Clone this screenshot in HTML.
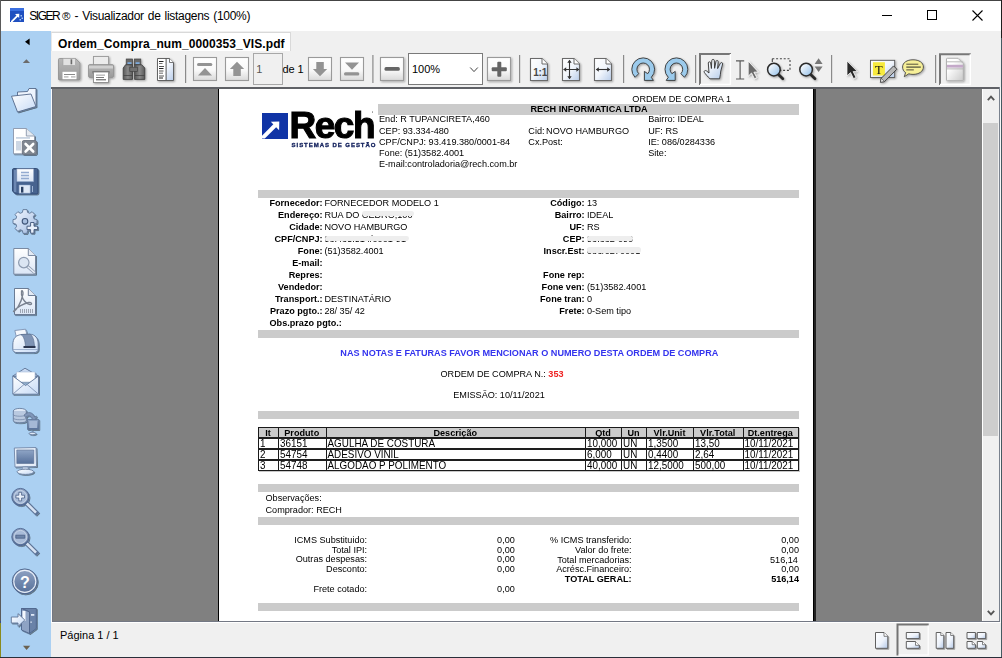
<!DOCTYPE html>
<html><head><meta charset="utf-8">
<style>
*{margin:0;padding:0;box-sizing:border-box}
html,body{width:1002px;height:658px;overflow:hidden;background:#fff;font-family:"Liberation Sans",sans-serif;position:relative}
.a{position:absolute}
.t{position:absolute;font-size:9.12px;line-height:9px;white-space:nowrap;color:#000}
#doc{position:absolute;left:0;top:0;width:1002px;height:658px;will-change:transform}
.b{font-weight:bold}
.r{text-align:right}
.bar{position:absolute;background:#cbcbcb}
.sep{position:absolute;width:1px;height:28px;top:55px;background:#8c8c8c}
.btn{position:absolute;width:24px;height:24px;top:57px;border:1px solid #9a9a9a;background:linear-gradient(#ffffff 0%,#f7f7f7 55%,#dcdcdc 100%)}
.pressed{position:absolute;border-top:2px solid #7d7d7d;border-left:2px solid #7d7d7d;border-right:1px solid #fff;border-bottom:1px solid #fff;background:#f0f0f0}
svg{position:absolute;overflow:visible}
.blur{display:inline-block;height:8px;background:linear-gradient(90deg,#dedede,#ececec 30%,#e2e2e2 60%,#efefef);border-radius:4px;vertical-align:-1px;filter:blur(0.6px)}
</style></head><body>

<!-- window border -->
<div class="a" style="left:0;top:0;width:1002px;height:1px;background:#444"></div>
<div class="a" style="left:0;top:0;width:1px;height:658px;background:#5a5a5a"></div>
<div class="a" style="left:1000px;top:31px;width:1px;height:627px;background:#f8f8f8"></div>
<div class="a" style="left:1001px;top:0;width:1px;height:38px;background:#1e1e1e"></div>
<div class="a" style="left:1001px;top:38px;width:1px;height:620px;background:#465a62"></div>

<!-- title bar -->
<svg style="left:10px;top:8px" width="14" height="14" viewBox="0 0 14 14"><rect width="14" height="14" fill="#1f4fc0"/><rect width="14" height="3" fill="#3a6fe0"/><path d="M1 13 L6.5 7.5 L5 6 L9.3 5.8 L9.2 10 L7.8 8.7 L2.5 14 L1 14 Z" fill="#fff"/><g fill="#9fc0f0"><rect x="10.5" y="7" width="1.5" height="1.5"/><rect x="11.5" y="9.5" width="1.5" height="1.5"/><rect x="9.5" y="11" width="1.5" height="1.5"/></g></svg>
<div class="a" style="left:29.3px;top:8px;font-size:12px;line-height:16px;color:#000;white-space:nowrap"><span style="letter-spacing:-1.5px">SIGER</span><span style="margin-left:2.8px;font-size:11.5px">®</span><span style="letter-spacing:-0.3px;word-spacing:1px"> - Visualizador de listagens (100%)</span></div>
<div class="a" style="left:882px;top:15px;width:10px;height:1px;background:#000"></div>
<div class="a" style="left:927px;top:10px;width:10px;height:10px;border:1px solid #000"></div>
<svg style="left:972px;top:10px" width="11" height="11"><path d="M0.5 0.5L10.5 10.5M10.5 0.5L0.5 10.5" stroke="#000" stroke-width="1.1"/></svg>

<!-- sidebar -->
<div class="a" style="left:1px;top:31px;width:50px;height:626px;background:#abd0f2"></div>

<!-- SIDEBAR -->
<svg style="left:0;top:0" width="52" height="658" viewBox="0 0 52 658">
<defs>
<linearGradient id="sW" x1="0" y1="0" x2="1" y2="1"><stop offset="0" stop-color="#ffffff"/><stop offset="1" stop-color="#c7dbf6"/></linearGradient>
<linearGradient id="sW2" x1="0" y1="0" x2="0" y2="1"><stop offset="0" stop-color="#ffffff"/><stop offset="1" stop-color="#dbe6f6"/></linearGradient>
<linearGradient id="sB" x1="0" y1="0" x2="0" y2="1"><stop offset="0" stop-color="#8fa5c6"/><stop offset="1" stop-color="#56709a"/></linearGradient>
<linearGradient id="sG" x1="0" y1="0" x2="1" y2="1"><stop offset="0" stop-color="#f2f7ff"/><stop offset="0.6" stop-color="#c3d4ee"/><stop offset="1" stop-color="#8fa9d2"/></linearGradient>
<linearGradient id="sHelp" x1="0" y1="0" x2="0" y2="1"><stop offset="0" stop-color="#8fa3c4"/><stop offset="1" stop-color="#566f98"/></linearGradient>
<filter id="ss" x="-20%" y="-20%" width="150%" height="150%"><feGaussianBlur in="SourceAlpha" stdDeviation="0.7"/><feOffset dx="0.8" dy="1"/><feComponentTransfer><feFuncA type="linear" slope="0.45"/></feComponentTransfer><feMerge><feMergeNode/><feMergeNode in="SourceGraphic"/></feMerge></filter>
</defs>
<path d="M29.6 38.4 L25 41.8 L29.6 45.2 Z" fill="#000"/>
<path d="M22.8 63.1 L26.4 59.2 L30 63.1 Z" fill="#6b6b6b"/>
<path d="M23 645.8 L30.2 645.8 L26.6 650.1 Z" fill="#6b6150"/>

<g filter="url(#ss)" stroke="#55698a" stroke-width="0.9" stroke-linejoin="round">
<!-- folder -->
<path d="M17.5 111.5 L17.5 92 L27.5 91.5 L29 88.5 L36 88.5 L36 106.5 Z" fill="#eef4fd"/>
<path d="M11.5 96.2 L31 94 L36 106.5 L17.5 112 Z" fill="url(#sW)"/>

<!-- doc x -->
<path d="M13.5 128.5 L26.3 128.5 L34.5 136 L34.5 153.8 L13.5 153.8 Z" fill="#fff" stroke="#8a96aa"/>
<path d="M26.3 128.5 L26.3 136 L34.5 136" fill="#e6ebf2" stroke="#8a96aa"/>
<rect x="16" y="137" width="14" height="1.8" fill="#c9d4e2" stroke="none"/>
<rect x="16" y="141" width="5" height="9.5" fill="#cdd7e4" stroke="none"/>
<rect x="22.3" y="140.5" width="14.2" height="14" rx="1.5" fill="#7f8690" stroke="#6c7380"/>
<path d="M25.6 144 L33.2 151.5 M33.2 144 L25.6 151.5" stroke="#fff" stroke-width="2.6" stroke-linecap="round"/>

<!-- floppy -->
<path d="M13.8 168.5 L36.5 168.5 Q38 168.5 38 170 L38 192.5 Q38 194 36.5 194 L15.5 194 L12.5 191 L12.5 170 Q12.5 168.5 13.8 168.5 Z" fill="#47638f" stroke="#2e4670"/>
<rect x="14" y="170" width="2.3" height="22" fill="#6d88b2" stroke="none"/>
<rect x="16.8" y="168.9" width="16.8" height="12.7" fill="url(#sW2)" stroke="#8aa2c6" stroke-width="0.5"/>
<g stroke="#93abd0" stroke-width="1.3"><path d="M21 172.5 L29 172.5 M21 175.5 L29 175.5 M21 178.5 L29 178.5"/></g>
<rect x="19.1" y="185" width="11.1" height="8.2" fill="#dfe9f7" stroke="#8aa2c6" stroke-width="0.5"/>
<rect x="21" y="186.8" width="2.4" height="5.8" fill="#2c3f62" stroke="none"/>
<rect x="32" y="186" width="1" height="6" fill="#9fb4d4" stroke="none"/>

<!-- gear -->
<path d="M23 209.6 L27 209.6 L27.6 212.4 L29.8 213.3 L32.1 211.7 L34.9 214.5 L33.3 216.8 L34.2 219 L37 219.6 L37 223.4 L34.2 224 L33.3 226.2 L34.9 228.5 L32.1 231.3 L29.8 229.7 L27.6 230.6 L27 233.4 L23 233.4 L22.4 230.6 L20.2 229.7 L17.9 231.3 L15.1 228.5 L16.7 226.2 L15.8 224 L13 223.4 L13 219.6 L15.8 219 L16.7 216.8 L15.1 214.5 L17.9 211.7 L20.2 213.3 L22.4 212.4 Z" fill="url(#sG)" stroke="#5f7697"/>
<circle cx="25" cy="221.3" r="2.8" fill="#a9bfdf" stroke="#3f5578" stroke-width="1.1"/>
<path d="M30.6 222.5 L34 222.5 L34 226.2 L37.6 226.2 L37.6 229.6 L34 229.6 L34 233.2 L30.6 233.2 L30.6 229.6 L27 229.6 L27 226.2 L30.6 226.2 Z" fill="#e9f0fb" stroke="#3f5578"/>

<!-- doc search -->
<path d="M13.8 248.5 L28.3 248.5 L35.5 255.5 L35.5 274.2 L13.8 274.2 Z" fill="url(#sW2)" stroke="#6f7f98"/>
<path d="M28.3 248.5 L28.3 255.5 L35.5 255.5" fill="#e3eaf4" stroke="#6f7f98"/>
<line x1="27.5" y1="266.5" x2="34.3" y2="272.3" stroke="#8d9bb0" stroke-width="3" stroke-linecap="round"/>
<line x1="27.5" y1="266.5" x2="34.3" y2="272.3" stroke="#e6ecf5" stroke-width="1.6" stroke-linecap="round"/>
<circle cx="23.8" cy="262.6" r="5.2" fill="#dbe5f2" stroke="#8d9bb0" stroke-width="1.2"/>

<!-- pdf -->
<path d="M14.5 288.5 L28.3 288.5 L35.5 295.5 L35.5 314.6 L14.5 314.6 Z" fill="url(#sW2)" stroke="#5f6f8a"/>
<path d="M28.3 288.5 L28.3 295.5 L35.5 295.5" fill="#e3eaf4" stroke="#5f6f8a"/>
<path d="M21.5 291 C20.5 296 24 303 30 304.5 C32.5 305 32 302 28.5 302.5 C24 303.5 17 307 13.5 311.5 C16 310.5 21 304 23 294 C23.3 291.5 22 290 21.5 291 Z" fill="none" stroke="#7a8290" stroke-width="1.3"/>
<g stroke="#8b93a0" stroke-width="0.8"><path d="M20.5 309 L20.5 313 M22.5 309 L22.5 313 M24.5 309 L24.5 313 M26.5 309 L26.5 313 M28.5 309 L28.5 313 M30.5 309 L30.5 313 M32.5 309 L32.5 313"/></g>

<!-- printer -->
<path d="M14.8 330.5 L25.5 329.2 L27.3 336 L16.5 337.5 Z" fill="#f4f7fc" stroke="#7f93b3"/>
<path d="M12.8 345 C12.8 338 16 335 22 334.5 L30 334.2 C35 334.5 38.2 338 38.2 344 L38.2 349 C38.2 351.5 36.5 352.6 34 352.6 L17 352.6 C14.5 352.6 12.8 351.5 12.8 349 Z" fill="url(#sW)" stroke="#5e7497"/>
<path d="M21 334.5 L30 334.2 C33 336 34 340 34.5 346 L25.5 346.5 C25 340.5 24 337 21 334.5 Z" fill="#7e93b4" stroke="#55698a" stroke-width="0.6"/>
<rect x="23.5" y="346" width="12" height="2" fill="#2b3650" stroke="none"/>
<path d="M13 349.5 L38 349.5" stroke="#8ea3c4" stroke-width="0.8"/>

<!-- envelope -->
<path d="M12.8 376 L25 368.2 L38.5 376 Z" fill="#c9d9f1" stroke="#5f7597"/>
<rect x="16.5" y="372" width="18.5" height="10" fill="#fff" stroke="#a9bcd9" stroke-width="0.6"/>
<path d="M12.8 376 L25.6 385.5 L38.5 376 L38.5 394.2 L12.8 394.2 Z" fill="url(#sW)" stroke="#5f7597"/>
<path d="M13 394 L24.6 384 C25.2 383.5 26 383.5 26.6 384 L38.3 394" fill="none" stroke="#7f93b3" stroke-width="0.9"/>
<!-- db network -->
<ellipse cx="19.8" cy="411" rx="6.5" ry="2.6" fill="#dfe8f5" stroke="#5f7597" stroke-width="0.8"/>
<path d="M13.3 411 L13.3 421 C13.3 423.3 26.3 423.3 26.3 421 L26.3 411" fill="#b9c9e0" stroke="#5f7597" stroke-width="0.8"/>
<path d="M13.3 414.5 C13.3 416.8 26.3 416.8 26.3 414.5 M13.3 418 C13.3 420.3 26.3 420.3 26.3 418" fill="none" stroke="#6d82a4" stroke-width="0.7"/>
<path d="M24 415 C28 411 33 412 34.5 417 L36.5 416 L35 421.5 L30.5 419.5 L32.3 418.5 C31 415.5 28 415 25.5 417.5 Z" fill="#7f95b8" stroke="#55698a" stroke-width="0.6"/>
<rect x="27.5" y="419.5" width="11.3" height="10" fill="url(#sB)" stroke="#5f7597" stroke-width="0.8"/>
<rect x="29.2" y="421" width="8" height="7" fill="#a5b8d6" stroke="none"/>
<path d="M32.2 429.5 L32.2 432 M29 433.5 C29 432 36 432 36 433.5 C36 435 29 435 29 433.5 Z" fill="#dfe8f5" stroke="#5f7597" stroke-width="0.8"/>

<!-- monitor -->
<path d="M14.3 448 L36 447.5 L36.5 466.5 L15 467 Z" fill="#e6eef9" stroke="#6f84a6"/>
<rect x="16.8" y="450" width="17" height="13.5" fill="url(#sB)" stroke="#5a6f92" stroke-width="0.6"/>
<path d="M22.5 467 L28 467 L28.5 470 L22 470 Z" fill="#c9d7eb" stroke="#6f84a6" stroke-width="0.7"/>
<ellipse cx="25.4" cy="471.8" rx="8.4" ry="2.6" fill="url(#sW)" stroke="#5f7597" stroke-width="0.8"/>

<!-- zoom in / out -->
<line x1="26.8" y1="503.5" x2="36" y2="512.6" stroke="#5c7398" stroke-width="4.6" stroke-linecap="square"/>
<line x1="26.8" y1="503.5" x2="36" y2="512.6" stroke="#d8e3f3" stroke-width="2.6"/>
<circle cx="20.4" cy="497" r="8.6" fill="url(#sHelp)" stroke="#4f6590" stroke-width="0.9"/>
<circle cx="20.4" cy="497" r="6.6" fill="#a9bcd9" stroke="#dfe8f5" stroke-width="0.7"/>
<path d="M18.8 492.3 L21.6 492.3 L21.6 495.2 L24.5 495.2 L24.5 498 L21.6 498 L21.6 500.9 L18.8 500.9 L18.8 498 L15.9 498 L15.9 495.2 L18.8 495.2 Z" fill="#e8effa" stroke="#4a5f85" stroke-width="0.8"/>
<line x1="26.8" y1="543.5" x2="36" y2="552.6" stroke="#5c7398" stroke-width="4.6" stroke-linecap="square"/>
<line x1="26.8" y1="543.5" x2="36" y2="552.6" stroke="#d8e3f3" stroke-width="2.6"/>
<circle cx="20.4" cy="537" r="8.6" fill="url(#sHelp)" stroke="#4f6590" stroke-width="0.9"/>
<circle cx="20.4" cy="537" r="6.6" fill="#a9bcd9" stroke="#dfe8f5" stroke-width="0.7"/>
<rect x="15.8" y="535.2" width="9" height="3" fill="#6e85aa" stroke="#4a5f85" stroke-width="0.8"/>

<!-- help -->
<circle cx="24.8" cy="581.4" r="12.5" fill="url(#sHelp)" stroke="#4d638a" stroke-width="0.9"/>
<circle cx="24.8" cy="581.4" r="11" fill="none" stroke="#e9eff8" stroke-width="1.1"/>
<!-- exit -->
<path d="M21.5 608.5 L36.3 608.5 L36.3 628.5 L29.5 633.5 L29.5 612 Z" fill="#6b82a8" stroke="#4d638a"/>
<path d="M21.5 608.5 L29.5 612 L29.5 633.5 L21.5 630 Z" fill="#8ea3c4" stroke="#4d638a"/>
<rect x="22.5" y="611" width="3" height="10" fill="#f4f8fe" stroke="none"/>
<rect x="31" y="614" width="3.3" height="1.8" fill="#dfe8f5" stroke="none"/>
<rect x="30.4" y="621.5" width="1.4" height="1.3" fill="#dfe8f5" stroke="none"/>
<path d="M11.3 617 L18 617 L18 613.6 L24.8 620 L18 626.4 L18 623 L11.3 623 Z" fill="url(#sW)" stroke="#5f7597"/>
</g>
<text x="24.8" y="587.5" font-family="Liberation Sans" font-weight="bold" font-size="16" text-anchor="middle" fill="#fff">?</text>
</svg>
<!-- END SIDEBAR -->

<!-- tab strip -->
<div class="a" style="left:51px;top:31px;width:950px;height:20px;background:#f0f0f0"></div>
<div class="a" style="left:51px;top:32px;width:240px;height:19px;background:#fff;border-top:1px solid #d9d9d9;border-right:1px solid #d9d9d9;border-left:1px solid #e8e8e8"></div>
<div class="a b" style="left:58px;top:36px;font-size:12px;line-height:16px;letter-spacing:0.08px;color:#000;white-space:nowrap">Ordem_Compra_num_0000353_VIS.pdf</div>

<!-- toolbar -->
<div class="a" style="left:51px;top:51px;width:950px;height:36px;background:#f0f0f0"></div>
<div class="a" style="left:51px;top:87px;width:949px;height:2px;background:#5f6166"></div>

<!-- TOOLBAR -->
<svg style="left:0;top:0" width="1002" height="90" viewBox="0 0 1002 90">
<defs>
<linearGradient id="gBtn" x1="0" y1="0" x2="0" y2="1"><stop offset="0" stop-color="#fff"/><stop offset="0.55" stop-color="#f9f9f9"/><stop offset="1" stop-color="#d9d9d9"/></linearGradient>
<linearGradient id="gPage" x1="0" y1="0" x2="1" y2="1"><stop offset="0" stop-color="#fff"/><stop offset="0.5" stop-color="#f2f6fc"/><stop offset="1" stop-color="#b9cdea"/></linearGradient>
<linearGradient id="gLens" x1="0" y1="0" x2="1" y2="1"><stop offset="0.1" stop-color="#fff"/><stop offset="1" stop-color="#8fbde8"/></linearGradient>
<linearGradient id="gGray" x1="0" y1="0" x2="0" y2="1"><stop offset="0" stop-color="#b8b8b8"/><stop offset="1" stop-color="#9a9a9a"/></linearGradient>
<linearGradient id="gBin" x1="0" y1="0" x2="1" y2="0"><stop offset="0" stop-color="#5a5a5a"/><stop offset="0.5" stop-color="#8a8a8a"/><stop offset="1" stop-color="#5a5a5a"/></linearGradient>
<linearGradient id="gHand" x1="0" y1="0" x2="1" y2="1"><stop offset="0.2" stop-color="#fff"/><stop offset="1" stop-color="#b4cbea"/></linearGradient>
<filter id="sh" x="-20%" y="-20%" width="150%" height="150%"><feGaussianBlur in="SourceAlpha" stdDeviation="0.8"/><feOffset dx="1" dy="1"/><feComponentTransfer><feFuncA type="linear" slope="0.35"/></feComponentTransfer><feMerge><feMergeNode/><feMergeNode in="SourceGraphic"/></feMerge></filter>
</defs>

<!-- 1 floppy (disabled gray) -->
<g filter="url(#sh)">
<path d="M58.5 59.5 Q58.5 58.5 59.5 58.5 L75.5 58.5 L80 63 L80 79 Q80 80 79 80 L59.5 80 Q58.5 80 58.5 79 Z" fill="url(#gGray)" stroke="#8e8e8e" stroke-width="0.8"/>
<rect x="63" y="58.5" width="12.5" height="7" fill="#e2e2e2" stroke="#a0a0a0" stroke-width="0.6"/>
<rect x="70.6" y="59.3" width="1.6" height="5" fill="#6a6a6a"/>
<rect x="62.5" y="71.8" width="14" height="7.4" fill="#fff"/>
<rect x="64" y="74" width="11" height="1" fill="#8a8a8a"/>
<rect x="64" y="76.3" width="4.5" height="1.2" fill="#b0b0b0"/><rect x="71" y="76.3" width="4.5" height="1.2" fill="#b0b0b0"/>
</g>

<!-- 2 printer -->
<g filter="url(#sh)">
<rect x="93.5" y="56.5" width="15" height="10" fill="#ececec" stroke="#9a9a9a" stroke-width="0.9"/>
<path d="M89.5 64.5 L112.5 64.5 Q113.5 64.5 113.5 66 L113.5 76 Q113.5 77.5 112 77.5 L90 77.5 Q88.5 77.5 88.5 76 L88.5 66 Q88.5 64.5 89.5 64.5 Z" fill="url(#gGray)" stroke="#909090" stroke-width="0.8"/>
<rect x="89" y="66" width="24" height="2.5" fill="#d0d0d0"/>
<rect x="92.5" y="71" width="17" height="2.5" fill="#6e6e6e"/>
<rect x="93.5" y="72" width="15" height="10.5" fill="#fff" stroke="#8a8a8a" stroke-width="0.9"/>
<rect x="96" y="74.5" width="9" height="1.3" fill="#b5b5b5"/><rect x="96" y="77" width="8" height="1" fill="#7a7a7a"/><rect x="96" y="79.3" width="10" height="1" fill="#4a4a4a"/>
</g>

<!-- 3 binoculars -->
<g filter="url(#sh)">
<rect x="126.2" y="59" width="6.4" height="5.8" fill="#6a6a6a" stroke="#444" stroke-width="0.7"/>
<rect x="134.4" y="59" width="6.4" height="5.8" fill="#6a6a6a" stroke="#444" stroke-width="0.7"/>
<rect x="127.5" y="62.3" width="4" height="1.6" fill="#7fb2ea"/><rect x="135.6" y="62.3" width="4" height="1.6" fill="#7fb2ea"/>
<path d="M125.5 64.8 L132.5 64.8 L132.5 79.4 L123.2 79.4 L123.2 68 Z" fill="url(#gBin)" stroke="#3e3e3e" stroke-width="0.8"/>
<path d="M134.6 64.8 L141.8 64.8 L144.8 68 L144.8 79.4 L134.6 79.4 Z" fill="url(#gBin)" stroke="#3e3e3e" stroke-width="0.8"/>
<rect x="129.8" y="67.2" width="7.6" height="4.2" fill="#707070" stroke="#444" stroke-width="0.7"/>
<rect x="123.5" y="75" width="9" height="0.8" fill="#454545"/><rect x="134.8" y="75" width="9.8" height="0.8" fill="#454545"/>
</g>

<!-- 4 doc with lines -->
<g filter="url(#sh)">
<path d="M157.5 58.5 L169.5 58.5 L173.5 62.5 L173.5 80.5 L157.5 80.5 Z" fill="url(#gPage)" stroke="#555" stroke-width="0.9"/>
<rect x="158" y="59" width="7.5" height="21" fill="#fff"/>
<rect x="165.6" y="58.6" width="1" height="21.8" fill="#555"/>
<path d="M169.5 58.5 L169.5 62.5 L173.5 62.5" fill="#fff" stroke="#555" stroke-width="0.8"/>
<g fill="#222"><rect x="159" y="61" width="4.5" height="1"/><rect x="159" y="63" width="3.5" height="1" fill="#777"/><rect x="159" y="66" width="5" height="1" fill="#555"/><rect x="159" y="68" width="4.5" height="1"/><rect x="159" y="70.5" width="4.5" height="1" fill="#555"/><rect x="159" y="72.5" width="4" height="1.5" fill="#999"/><rect x="159" y="75.5" width="5" height="1" fill="#555"/><rect x="159" y="77.5" width="4" height="1"/></g>
</g>

<!-- separators -->
<g fill="#8a8a8a"><rect x="185" y="55" width="1.2" height="28"/><rect x="372.3" y="55" width="1.2" height="28"/><rect x="519" y="55" width="1.2" height="28"/><rect x="623" y="55" width="1.2" height="28"/><rect x="695" y="55" width="1.2" height="28"/><rect x="831" y="55" width="1.2" height="28"/><rect x="935" y="55" width="1.2" height="28"/></g>

<!-- nav buttons -->
<g stroke="#9a9a9a" stroke-width="1.1" fill="url(#gBtn)">
<rect x="193.5" y="57.5" width="23" height="23"/>
<rect x="225.5" y="57.5" width="23" height="23"/>
<rect x="308.5" y="57.5" width="23" height="23"/>
<rect x="340.5" y="57.5" width="23" height="23"/>
</g>
<g fill="#939393">
<rect x="197" y="62.9" width="15.3" height="3.2" rx="1.5"/><path d="M198 75.4 L205 68 L212 75.4 Z"/>
<path d="M237 61.7 L244.2 69 L240.8 69 L240.8 76 L233.3 76 L233.3 69 L229.9 69 Z"/>
<path d="M320 76.3 L327.2 69 L323.8 69 L323.8 62 L316.3 62 L316.3 69 L312.9 69 Z"/>
<rect x="344" y="72.3" width="15.3" height="3.2" rx="1.5"/><path d="M345 62.5 L352 69.8 L359 62.5 Z"/>
</g>

<!-- page input -->
<rect x="253.5" y="53.5" width="29" height="31" fill="#f0f0f0" stroke="#a8a8a8" stroke-width="1"/>

<!-- minus / plus buttons -->
<g filter="url(#sh)">
<rect x="380.5" y="57.5" width="23" height="23" fill="url(#gBtn)" stroke="#9a9a9a" stroke-width="1.1"/>
<rect x="487.5" y="57.5" width="23" height="23" fill="url(#gBtn)" stroke="#9a9a9a" stroke-width="1.1"/>
</g>
<rect x="384.5" y="67.1" width="15.3" height="3.7" rx="1.5" fill="#646464"/>
<rect x="491.7" y="67.3" width="15.1" height="3.9" rx="1" fill="#646464"/>
<rect x="497.3" y="61.7" width="4" height="15.1" rx="1" fill="#646464"/>

<!-- combo -->
<rect x="408.5" y="53.5" width="74" height="31" fill="#fff" stroke="#7a7a7a" stroke-width="1"/>
<path d="M470.2 67.5 L474 71.6 L477.8 67.5" fill="none" stroke="#444" stroke-width="1"/>

<!-- fit icons -->
<g filter="url(#sh)">
<path d="M530.5 58.5 L542 58.5 L547.5 64 L547.5 80.5 L530.5 80.5 Z" fill="url(#gPage)" stroke="#6a6a6a" stroke-width="1.1"/>
<path d="M542 58.5 L542 64 L547.5 64" fill="#fff" stroke="#6a6a6a" stroke-width="1"/>
<path d="M562.5 58.5 L574 58.5 L579.5 64 L579.5 80.5 L562.5 80.5 Z" fill="url(#gPage)" stroke="#6a6a6a" stroke-width="1.1"/>
<path d="M574 58.5 L574 64 L579.5 64" fill="#fff" stroke="#6a6a6a" stroke-width="1"/>
<path d="M594.5 58.5 L606 58.5 L611.5 64 L611.5 80.5 L594.5 80.5 Z" fill="url(#gPage)" stroke="#6a6a6a" stroke-width="1.1"/>
<path d="M606 58.5 L606 64 L611.5 64" fill="#fff" stroke="#6a6a6a" stroke-width="1"/>
</g>
<text x="533.2" y="75.6" font-family="Liberation Sans" font-weight="bold" font-size="10" fill="#474747" letter-spacing="-0.2">1:1</text>
<g stroke="#333" stroke-width="1.1" fill="#333">
<path d="M569.5 60.5 L569.5 78.5 M563.8 69.5 L578.8 69.5" fill="none"/>
<path d="M569.5 59.8 L567.3 62.8 L571.7 62.8 Z M569.5 79.2 L567.3 76.2 L571.7 76.2 Z M563.2 69.5 L566.2 67.3 L566.2 71.7 Z M579.4 69.5 L576.4 67.3 L576.4 71.7 Z" stroke="none"/>
<path d="M596.5 69.5 L609.5 69.5" fill="none"/>
<path d="M595.8 69.5 L598.8 67.3 L598.8 71.7 Z M610.2 69.5 L607.2 67.3 L607.2 71.7 Z" stroke="none"/>
</g>

<!-- rotate icons -->
<g filter="url(#sh)" fill="#9ccbec" stroke="#333" stroke-width="0.9" stroke-linejoin="round">
<path d="M635.1 77.3 A11.4 11.4 0 1 1 651.3 77.3 L653.4 80.4 L644.4 80.4 L644.4 71.4 L647.7 73.7 A6.3 6.3 0 1 0 638.7 73.7 Z"/>
<path d="M684.5 77.3 A11.4 11.4 0 1 0 668.3 77.3 L666.2 80.4 L675.2 80.4 L675.2 71.4 L671.9 73.7 A6.3 6.3 0 1 1 680.9 73.7 Z"/>
</g>

<!-- pressed button hand -->
<path d="M700 85 L700 54 L731 54" fill="none" stroke="#777" stroke-width="2"/>
<path d="M700 84.4 L730.4 84.4 L730.4 54" fill="none" stroke="#fff" stroke-width="1.4"/>
<g filter="url(#sh)">
<path d="M710 78.8 C707.5 76.5 705.5 74 704.3 72.3 C703.6 71.2 705 70 706.3 70.8 L709 73 L708.3 63 C708.2 61.6 710.3 61.4 710.6 62.8 L711.4 68.5 L711.8 60.6 C711.9 59 714.2 59 714.3 60.6 L714.6 68.3 L716 61.4 C716.3 60 718.4 60.3 718.2 61.8 L717.6 68.6 L720.4 63.2 C721 62 723.1 62.6 722.6 64 L720.8 71 C720.4 73.5 720.3 76 719.6 78.8 Z" fill="url(#gHand)" stroke="#333" stroke-width="0.9" stroke-linejoin="round"/>
</g>

<!-- I-beam -->
<g fill="none" stroke="#5a5a5a" stroke-width="1.2"><path d="M736 60.8 L744.2 60.8 M736 79 L744.2 79 M740.1 60.8 L740.1 79"/></g>
<!-- gray arrow -->
<path d="M748.2 61 L748.2 76.2 L751.5 73 L754.5 78.8 L756.8 77.6 L753.9 72.2 L758.2 71.9 Z" fill="#6b6b6b" stroke="#fff" stroke-width="0.8" filter="url(#sh)"/>

<!-- zoom rect -->
<path d="M772.3 58.8 L790 58.8 L790 70.4 L780 70.4" fill="none" stroke="#444" stroke-width="1.1" stroke-dasharray="2 1.8"/>
<path d="M772.3 58.8 L772.3 62" fill="none" stroke="#444" stroke-width="1.1"/>
<g filter="url(#sh)">
<line x1="778.2" y1="74.2" x2="782.8" y2="78.8" stroke="#2b2b2b" stroke-width="2.8" stroke-linecap="round"/>
<circle cx="773.9" cy="69.6" r="6.3" fill="url(#gLens)" stroke="#2b2b2b" stroke-width="1.5"/>
<line x1="810.4" y1="74.2" x2="815" y2="78.8" stroke="#2b2b2b" stroke-width="2.8" stroke-linecap="round"/>
<circle cx="806.1" cy="69.6" r="6.3" fill="url(#gLens)" stroke="#2b2b2b" stroke-width="1.5"/>
</g>
<path d="M818.6 58.2 L822.6 63.9 L814.6 63.9 Z M814.6 66.5 L822.6 66.5 L818.6 72 Z" fill="#777"/>

<!-- black arrow -->
<path d="M847 61 L847 75.8 L850.5 72.6 L853.5 78.6 L856 77.4 L853.1 71.6 L857.3 71.5 Z" fill="#2a2a2a" stroke="#fff" stroke-width="0.7" filter="url(#sh)"/>

<!-- T edit -->
<g filter="url(#sh)">
<rect x="870.5" y="60.3" width="24.2" height="17.2" fill="url(#gPage)" stroke="#555" stroke-width="0.9"/>
<rect x="872.9" y="62.2" width="12" height="13.3" fill="#f7ea3e"/>
<text x="878.9" y="73.6" font-family="Liberation Serif" font-size="12.5" text-anchor="middle" fill="#111">T</text>
<path d="M880.4 82.2 L881.2 78.3 L893.6 65.9 L896.9 69.2 L884.5 81.6 Z" fill="#b8b8b8" stroke="#333" stroke-width="0.9" stroke-linejoin="round"/>
<path d="M880.4 82.2 L881.2 78.3 L884.5 81.6 Z" fill="#eee" stroke="#333" stroke-width="0.6"/>
</g>

<!-- comment -->
<g filter="url(#sh)">
<path d="M913 59.8 C919 59.8 923.4 62.6 923.4 67 C923.4 71.3 919 74.4 913 74.4 C911.6 74.4 910 74.2 908.8 73.8 L904.3 76.7 L905.6 72.6 C903.6 71.3 902.6 69.2 902.6 67 C902.6 62.6 907 59.8 913 59.8 Z" fill="#f6ef98" stroke="#444" stroke-width="0.9"/>
<rect x="906.3" y="63.6" width="12" height="1.3" fill="#7a7550"/><rect x="906.3" y="66.5" width="14.5" height="1.2" fill="#4a4a3a"/><rect x="906.3" y="69.2" width="7.5" height="1.3" fill="#7a7550"/>
</g>

<!-- pressed button page -->
<path d="M940 85.1 L940 54.2 L970.8 54.2" fill="none" stroke="#777" stroke-width="2"/>
<path d="M940 84.5 L970.3 84.5 L970.3 54.3" fill="none" stroke="#fff" stroke-width="1.4"/>
<g filter="url(#sh)">
<linearGradient id="gPg2" x1="0" y1="0" x2="1" y2="1"><stop offset="0.3" stop-color="#fff"/><stop offset="1" stop-color="#c9c9c9"/></linearGradient>
<path d="M946.5 59 Q946.5 58.3 947.3 58.3 L958 58.3 L963.3 63.6 L963.3 80 Q963.3 80.7 962.6 80.7 L947.3 80.7 Q946.5 80.7 946.5 80 Z" fill="url(#gPg2)" stroke="#aaa" stroke-width="0.9"/>
<rect x="947" y="61.3" width="16" height="1" fill="#bbb"/>
<rect x="947" y="64.8" width="16" height="2.8" fill="#c4a9c9"/>
<rect x="947" y="68.5" width="16" height="0.8" fill="#aaa"/>
</g>
</svg>
<div class="a" style="left:256.2px;top:62px;font-size:11px;line-height:14px;color:#555;white-space:nowrap">1</div>
<div class="a" style="left:282.5px;top:61px;font-size:11px;line-height:16px;color:#000;white-space:nowrap;letter-spacing:-0.1px">de 1</div>
<div class="a" style="left:412px;top:61px;font-size:11px;line-height:16px;color:#000;white-space:nowrap">100%</div>
<!-- END TOOLBAR -->

<!-- doc area -->
<div class="a" style="left:52px;top:89px;width:930px;height:533px;background:#808080"></div>
<div class="a" style="left:52px;top:89px;width:1px;height:533px;background:#737884"></div>
<div class="a" style="left:51px;top:89px;width:1px;height:534px;background:#fafafa"></div>
<!-- scrollbar -->
<div class="a" style="left:982px;top:89px;width:1px;height:532px;background:#fff"></div>
<div class="a" style="left:983px;top:89px;width:16px;height:532px;background:#f0f0f0"></div>
<div class="a" style="left:983px;top:123px;width:15px;height:313px;background:#cdcdcd"></div>
<div class="a" style="left:999px;top:87px;width:1px;height:535px;background:#7a828e"></div>
<svg style="left:987px;top:95px" width="8" height="6"><path d="M0.8 5.2L4 1.6L7.2 5.2" fill="none" stroke="#555" stroke-width="1.8"/></svg>
<svg style="left:987px;top:610px" width="8" height="6"><path d="M0.8 0.8L4 4.4L7.2 0.8" fill="none" stroke="#555" stroke-width="1.8"/></svg>

<!-- page -->
<div class="a" style="left:218px;top:89px;width:598px;height:533px;background:#fff;border-left:1px solid #000;border-right:3px solid #222"></div>
<div class="a" style="left:813px;top:89px;width:1px;height:533px;background:#000"></div>

<div class="a" style="left:52px;top:621px;width:948px;height:1px;background:#737884"></div>
<!-- status bar -->
<div class="a" style="left:51px;top:622px;width:950px;height:1px;background:#fff"></div>
<div class="a" style="left:51px;top:623px;width:950px;height:34px;background:#f0f0f0"></div>
<div class="a" style="left:0;top:657px;width:1002px;height:1px;background:#2a2f3a"></div>
<div class="a" style="left:0;top:623px;width:1px;height:34px;background:#8a8a1e"></div>
<div class="a" style="left:0;top:621px;width:1px;height:2px;background:#3a4f80"></div>
<div class="a" style="left:60px;top:627px;font-size:11px;line-height:16px;color:#000;white-space:nowrap">Página 1 / 1</div>

<!-- STATUSICONS -->
<svg style="left:0;top:0" width="1002" height="658" viewBox="0 0 1002 658">
<defs>
<linearGradient id="gPs" x1="0" y1="0" x2="1" y2="1"><stop offset="0" stop-color="#fff"/><stop offset="0.55" stop-color="#eef3fb"/><stop offset="1" stop-color="#b3c8e8"/></linearGradient>
<filter id="sh2" x="-30%" y="-30%" width="160%" height="160%"><feGaussianBlur in="SourceAlpha" stdDeviation="0.6"/><feOffset dx="0.8" dy="0.8"/><feComponentTransfer><feFuncA type="linear" slope="0.35"/></feComponentTransfer><feMerge><feMergeNode/><feMergeNode in="SourceGraphic"/></feMerge></filter>
</defs>
<path d="M897.5 655.5 L897.5 624.5 L928.7 624.5" fill="none" stroke="#747474" stroke-width="2"/>
<path d="M898.5 655 L928.2 655 L928.2 625.5" fill="none" stroke="#fff" stroke-width="1.2"/>
<g filter="url(#sh2)" fill="url(#gPs)" stroke="#505050" stroke-width="0.9" stroke-linejoin="round">
<path d="M875.5 632.5 L884 632.5 L887.8 636.3 L887.8 648.3 L875.5 648.3 Z"/>
<path d="M906.3 632.5 L919.3 632.5 L919.3 638.6 L906.3 638.6 Z"/>
<path d="M906.3 641.5 L915.5 641.5 L919.3 645.3 L919.3 648.3 L906.3 648.3 Z"/>
<path d="M936.2 632.5 L940.8 632.5 L943.8 635.5 L943.8 648.3 L936.2 648.3 Z"/>
<path d="M946 632.5 L950.7 632.5 L953.7 635.5 L953.7 648.3 L946 648.3 Z"/>
<path d="M967 632.5 L975.4 632.5 L975.4 638.6 L967 638.6 Z"/>
<path d="M977.3 632.5 L985.7 632.5 L985.7 638.6 L977.3 638.6 Z"/>
<path d="M967 641.5 L972.2 641.5 L975.4 644.7 L975.4 648.3 L967 648.3 Z"/>
<path d="M977.3 641.5 L982.5 641.5 L985.7 644.7 L985.7 648.3 L977.3 648.3 Z"/>
</g>
<g fill="#fff" stroke="#505050" stroke-width="0.7">
<path d="M884 632.5 L884 636.3 L887.8 636.3"/>
<path d="M915.5 641.5 L915.5 645.3 L919.3 645.3"/>
<path d="M940.8 632.5 L940.8 635.5 L943.8 635.5"/>
<path d="M950.7 632.5 L950.7 635.5 L953.7 635.5"/>
<path d="M972.2 641.5 L972.2 644.7 L975.4 644.7"/>
<path d="M982.5 641.5 L982.5 644.7 L985.7 644.7"/>
</g>
</svg>
<!-- END STATUSICONS -->

<!-- PAGE CONTENT -->
<div id="doc">
<div class="a" style="left:262px;top:113px;width:26px;height:25.6px;background:#1034a6"></div>
<svg style="left:262px;top:113px" width="26" height="26" viewBox="0 0 26 26"><path d="M0 22.7 L11.6 11.1 L14.4 13.9 L2.8 25.6 L0 25.6 Z M8.8 8.8 L17.3 8.6 L17.1 17.2 Z" fill="#fff"/></svg>
<div class="a b" style="left:289.5px;top:106px;font-size:37px;line-height:40px;letter-spacing:-1.5px;color:#000;-webkit-text-stroke:1.1px #000;white-space:nowrap">Rech</div>
<div class="a" style="left:371.6px;top:111.4px;width:1.6px;height:1.6px;border-radius:50%;background:#999"></div>
<div class="a b" style="left:291.6px;top:142px;font-size:6px;line-height:6px;letter-spacing:0.95px;color:#14225e;-webkit-text-stroke:0.35px #14225e;white-space:nowrap">SISTEMAS DE GESTÃO</div>
<div class="t " style="left:632.3px;top:95px;">ORDEM DE COMPRA 1</div>
<div class="bar" style="left:378px;top:104px;width:421px;height:11px"></div>
<div class="t b" style="left:530.4px;top:105px;">RECH INFORMATICA LTDA</div>
<div class="t " style="left:379px;top:115px;">End: R TUPANCIRETA,460</div>
<div class="t " style="left:379px;top:127px;">CEP: 93.334-480</div>
<div class="t " style="left:379px;top:138px;">CPF/CNPJ: 93.419.380/0001-84</div>
<div class="t " style="left:379px;top:149px;">Fone: (51)3582.4001</div>
<div class="t " style="left:379px;top:160px;">E-mail:controladoria@rech.com.br</div>
<div class="t " style="left:528.3px;top:127px;">Cid:<span style='margin-left:1.6px'>NOVO HAMBURGO</span></div>
<div class="t " style="left:528.3px;top:138px;">Cx.Post:</div>
<div class="t " style="left:648.2px;top:115px;">Bairro: IDEAL</div>
<div class="t " style="left:648.2px;top:127px;">UF: RS</div>
<div class="t " style="left:648.2px;top:138px;">IE: 086/0284336</div>
<div class="t " style="left:648.2px;top:149px;">Site:</div>
<div class="bar" style="left:258px;top:190px;width:541px;height:8px"></div>
<div class="t r b" style="left:22.600000000000023px;width:300px;top:199px;">Fornecedor:</div>
<div class="t " style="left:324.4px;top:199px;">FORNECEDOR MODELO 1</div>
<div class="t r b" style="left:22.600000000000023px;width:300px;top:211px;">Endereço:</div>
<div class="t " style="left:324.4px;top:211px;">RUA DO CEDRO,100</div>
<div class="t r b" style="left:22.600000000000023px;width:300px;top:223px;">Cidade:</div>
<div class="t " style="left:324.4px;top:223px;">NOVO HAMBURGO</div>
<div class="t r b" style="left:22.600000000000023px;width:300px;top:235px;">CPF/CNPJ:</div>
<div class="t " style="left:324.4px;top:235px;">93.435.514/0001-91</div>
<div class="t r b" style="left:22.600000000000023px;width:300px;top:247px;">Fone:</div>
<div class="t " style="left:324.4px;top:247px;">(51)3582.4001</div>
<div class="t r b" style="left:22.600000000000023px;width:300px;top:259px;">E-mail:</div>
<div class="t r b" style="left:22.600000000000023px;width:300px;top:271px;">Repres:</div>
<div class="t r b" style="left:22.600000000000023px;width:300px;top:283px;">Vendedor:</div>
<div class="t r b" style="left:22.600000000000023px;width:300px;top:295px;">Transport.:</div>
<div class="t " style="left:324.4px;top:295px;">DESTINATÁRIO</div>
<div class="t r b" style="left:22.600000000000023px;width:300px;top:307px;">Prazo pgto.:</div>
<div class="t " style="left:324.4px;top:307px;">28/ 35/ 42</div>
<div class="t b" style="left:269.5px;top:319px;">Obs.prazo pgto.:</div>
<div class="t r b" style="left:284.6px;width:300px;top:199px;">Código:</div>
<div class="t " style="left:587.0px;top:199px;">13</div>
<div class="t r b" style="left:284.6px;width:300px;top:211px;">Bairro:</div>
<div class="t " style="left:587.0px;top:211px;">IDEAL</div>
<div class="t r b" style="left:284.6px;width:300px;top:223px;">UF:</div>
<div class="t " style="left:587.0px;top:223px;">RS</div>
<div class="t r b" style="left:284.6px;width:300px;top:235px;">CEP:</div>
<div class="t " style="left:587.0px;top:235px;">93.332-090</div>
<div class="t r b" style="left:284.6px;width:300px;top:247px;">Inscr.Est:</div>
<div class="t " style="left:587.0px;top:247px;">086/0270001</div>
<div class="t r b" style="left:284.6px;width:300px;top:271px;">Fone rep:</div>
<div class="t r b" style="left:284.6px;width:300px;top:283px;">Fone ven:</div>
<div class="t " style="left:587.0px;top:283px;">(51)3582.4001</div>
<div class="t r b" style="left:284.6px;width:300px;top:295px;">Fone tran:</div>
<div class="t " style="left:587.0px;top:295px;">0</div>
<div class="t r b" style="left:284.6px;width:300px;top:307px;">Frete:</div>
<div class="t " style="left:587.0px;top:307px;">0-Sem tipo</div>
<div class="a" style="left:362px;top:211.2px;width:52px;height:5.3px;background:#eeeeee;border-radius:2.65px;filter:blur(0.35px)"></div>
<div class="a" style="left:325px;top:236.3px;width:84px;height:4.8px;background:#eeeeee;border-radius:2.4px;filter:blur(0.35px)"></div>
<div class="a" style="left:587px;top:236.2px;width:46px;height:4.6px;background:#eeeeee;border-radius:2.3px;filter:blur(0.35px)"></div>
<div class="a" style="left:587px;top:247px;width:54px;height:5.6px;background:#eeeeee;border-radius:2.8px;filter:blur(0.35px)"></div>
<div class="bar" style="left:258px;top:330px;width:541px;height:8px"></div>
<div class="t b" style="left:340.3px;top:349px;color:#3434ee">NAS NOTAS E FATURAS FAVOR MENCIONAR O NUMERO DESTA ORDEM DE COMPRA</div>
<div class="t " style="left:440.5px;top:370px;">ORDEM DE COMPRA N.: <b style="color:#ee2222">353</b></div>
<div class="t " style="left:453.3px;top:391px;">EMISSÃO: 10/11/2021</div>
<div class="bar" style="left:258px;top:411px;width:541px;height:8px"></div>
<div class="a" style="left:258px;top:428px;width:541px;height:9px;background:#cbcbcb"></div>
<div class="a" style="left:258px;top:427px;width:1.3px;height:44px;background:#1a1a1a"></div>
<div class="a" style="left:278px;top:427px;width:1.3px;height:44px;background:#1a1a1a"></div>
<div class="a" style="left:325.5px;top:427px;width:1.3px;height:44px;background:#1a1a1a"></div>
<div class="a" style="left:585px;top:427px;width:1.3px;height:44px;background:#1a1a1a"></div>
<div class="a" style="left:621px;top:427px;width:1.3px;height:44px;background:#1a1a1a"></div>
<div class="a" style="left:646px;top:427px;width:1.3px;height:44px;background:#1a1a1a"></div>
<div class="a" style="left:693px;top:427px;width:1.3px;height:44px;background:#1a1a1a"></div>
<div class="a" style="left:742.5px;top:427px;width:1.3px;height:44px;background:#1a1a1a"></div>
<div class="a" style="left:798px;top:427px;width:1.3px;height:44px;background:#1a1a1a"></div>
<div class="a" style="left:258px;top:427px;width:541px;height:1px;background:#1a1a1a"></div>
<div class="a" style="left:258px;top:437px;width:541px;height:2px;background:#1e1e1e"></div>
<div class="a" style="left:258px;top:448px;width:541px;height:2px;background:#1e1e1e"></div>
<div class="a" style="left:258px;top:459px;width:541px;height:2px;background:#1e1e1e"></div>
<div class="a" style="left:258px;top:470px;width:541px;height:1px;background:#1a1a1a"></div>
<div class="a" style="left:259px;top:471px;width:541px;height:1px;background:#c8c8c8"></div>
<div class="a" style="left:799px;top:428px;width:1px;height:44px;background:#c8c8c8"></div>
<div class="t b" style="left:258px;width:20px;text-align:center;top:429px;">It</div>
<div class="t b" style="left:278px;width:47.5px;text-align:center;top:429px;">Produto</div>
<div class="t b" style="left:325.5px;width:259.5px;text-align:center;top:429px;">Descrição</div>
<div class="t b" style="left:585px;width:36px;text-align:center;top:429px;">Qtd</div>
<div class="t b" style="left:621px;width:25px;text-align:center;top:429px;">Un</div>
<div class="t b" style="left:646px;width:47px;text-align:center;top:429px;">Vlr.Unit</div>
<div class="t b" style="left:693px;width:49.5px;text-align:center;top:429px;">Vlr.Total</div>
<div class="t b" style="left:742.5px;width:55.5px;text-align:center;top:429px;">Dt.entrega</div>
<div class="t " style="left:260.0px;top:438.6px;font-size:9.9px;transform:scaleY(1.12);transform-origin:0 100%">1</div>
<div class="t " style="left:280.0px;top:438.6px;font-size:9.9px;transform:scaleY(1.12);transform-origin:0 100%">36151</div>
<div class="t " style="left:327.5px;top:438.6px;font-size:9.9px;transform:scaleY(1.12);transform-origin:0 100%">AGULHA DE COSTURA</div>
<div class="t " style="left:587.0px;top:438.6px;font-size:9.9px;transform:scaleY(1.12);transform-origin:0 100%">10,000</div>
<div class="t " style="left:623.0px;top:438.6px;font-size:9.9px;transform:scaleY(1.12);transform-origin:0 100%">UN</div>
<div class="t " style="left:648.0px;top:438.6px;font-size:9.9px;transform:scaleY(1.12);transform-origin:0 100%">1,3500</div>
<div class="t " style="left:695.0px;top:438.6px;font-size:9.9px;transform:scaleY(1.12);transform-origin:0 100%">13,50</div>
<div class="t " style="left:744.5px;top:438.6px;font-size:9.9px;transform:scaleY(1.12);transform-origin:0 100%">10/11/2021</div>
<div class="t " style="left:260.0px;top:449.6px;font-size:9.9px;transform:scaleY(1.12);transform-origin:0 100%">2</div>
<div class="t " style="left:280.0px;top:449.6px;font-size:9.9px;transform:scaleY(1.12);transform-origin:0 100%">54754</div>
<div class="t " style="left:327.5px;top:449.6px;font-size:9.9px;transform:scaleY(1.12);transform-origin:0 100%">ADESIVO VINIL</div>
<div class="t " style="left:587.0px;top:449.6px;font-size:9.9px;transform:scaleY(1.12);transform-origin:0 100%">6,000</div>
<div class="t " style="left:623.0px;top:449.6px;font-size:9.9px;transform:scaleY(1.12);transform-origin:0 100%">UN</div>
<div class="t " style="left:648.0px;top:449.6px;font-size:9.9px;transform:scaleY(1.12);transform-origin:0 100%">0,4400</div>
<div class="t " style="left:695.0px;top:449.6px;font-size:9.9px;transform:scaleY(1.12);transform-origin:0 100%">2,64</div>
<div class="t " style="left:744.5px;top:449.6px;font-size:9.9px;transform:scaleY(1.12);transform-origin:0 100%">10/11/2021</div>
<div class="t " style="left:260.0px;top:460.6px;font-size:9.9px;transform:scaleY(1.12);transform-origin:0 100%">3</div>
<div class="t " style="left:280.0px;top:460.6px;font-size:9.9px;transform:scaleY(1.12);transform-origin:0 100%">54748</div>
<div class="t " style="left:327.5px;top:460.6px;font-size:9.9px;transform:scaleY(1.12);transform-origin:0 100%">ALGODAO P POLIMENTO</div>
<div class="t " style="left:587.0px;top:460.6px;font-size:9.9px;transform:scaleY(1.12);transform-origin:0 100%">40,000</div>
<div class="t " style="left:623.0px;top:460.6px;font-size:9.9px;transform:scaleY(1.12);transform-origin:0 100%">UN</div>
<div class="t " style="left:648.0px;top:460.6px;font-size:9.9px;transform:scaleY(1.12);transform-origin:0 100%">12,5000</div>
<div class="t " style="left:695.0px;top:460.6px;font-size:9.9px;transform:scaleY(1.12);transform-origin:0 100%">500,00</div>
<div class="t " style="left:744.5px;top:460.6px;font-size:9.9px;transform:scaleY(1.12);transform-origin:0 100%">10/11/2021</div>
<div class="bar" style="left:258px;top:484px;width:541px;height:8px"></div>
<div class="t " style="left:265.5px;top:494px;">Observações:</div>
<div class="t " style="left:265.5px;top:506px;">Comprador: RECH</div>
<div class="bar" style="left:258px;top:517px;width:541px;height:8px"></div>
<div class="t r " style="left:67.10000000000002px;width:300px;top:536px;">ICMS Substituido:</div>
<div class="t r " style="left:214.79999999999995px;width:300px;top:536px;">0,00</div>
<div class="t r " style="left:67.10000000000002px;width:300px;top:546px;">Total IPI:</div>
<div class="t r " style="left:214.79999999999995px;width:300px;top:546px;">0,00</div>
<div class="t r " style="left:67.10000000000002px;width:300px;top:555px;">Outras despesas:</div>
<div class="t r " style="left:214.79999999999995px;width:300px;top:555px;">0,00</div>
<div class="t r " style="left:67.10000000000002px;width:300px;top:565px;">Desconto:</div>
<div class="t r " style="left:214.79999999999995px;width:300px;top:565px;">0,00</div>
<div class="t r " style="left:67.10000000000002px;width:300px;top:585px;">Frete cotado:</div>
<div class="t r " style="left:214.79999999999995px;width:300px;top:585px;">0,00</div>
<div class="t r " style="left:331.6px;width:300px;top:536px;">% ICMS transferido:</div>
<div class="t r " style="left:499.0px;width:300px;top:536px;">0,00</div>
<div class="t r " style="left:331.6px;width:300px;top:546px;">Valor do frete:</div>
<div class="t r " style="left:499.0px;width:300px;top:546px;">0,00</div>
<div class="t r " style="left:331.6px;width:300px;top:556px;">Total mercadorias:</div>
<div class="t r " style="left:497.9px;width:300px;top:556px;">516,14</div>
<div class="t r " style="left:331.6px;width:300px;top:565px;">Acrésc.Financeiro:</div>
<div class="t r " style="left:499.0px;width:300px;top:565px;">0,00</div>
<div class="t r b" style="left:331.6px;width:300px;top:575px;">TOTAL GERAL:</div>
<div class="t r b" style="left:499.0px;width:300px;top:575px;">516,14</div>
<div class="bar" style="left:258px;top:603px;width:541px;height:8px"></div>
</div>
<!-- END PAGE CONTENT -->

</body></html>
